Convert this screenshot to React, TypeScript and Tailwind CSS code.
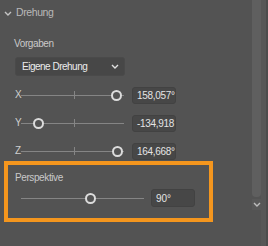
import React from 'react';

const font = { fontFamily: '"Liberation Sans", Arial, sans-serif' };

function Chevron({ className = '' }: { className?: string }) {
  return (
    <svg width="8" height="5" viewBox="0 0 8 5" className={className}>
      <path d="M1 1 L4 4 L7 1" fill="none" stroke="currentColor" strokeWidth="1.4" />
    </svg>
  );
}

function Slider({ width, knob, tick }: { width: number; knob: number; tick?: boolean }) {
  return (
    <div className="relative h-[20px]" style={{ width }}>
      <div className="absolute left-0 right-0 top-[9.5px] h-px bg-[#858585]" />
      {tick && <div className="absolute left-[53px] top-[6px] h-[8px] w-px bg-[#858585]" />}
      <div
        className="absolute top-[4.5px] h-[11px] w-[11px] rounded-full border-2 border-[#dcdcdc] bg-[#535353]"
        style={{ left: knob - 5.5 }}
      />
    </div>
  );
}

function ValueBox({ value }: { value: string }) {
  return (
    <div className="flex h-[17px] w-[44px] items-center rounded-[3px] border border-[#424242] bg-[#474747] pl-[4px] text-[10px] tracking-[-0.3px] text-[#e4e4e4]">
      {value}
    </div>
  );
}

function AxisRow({ label, knob, value }: { label: string; knob: number; value: string }) {
  return (
    <div className="flex h-[20px] items-center pl-[15px]">
      <span className="w-[6px] text-[10px] leading-none text-[#cfcfcf]">{label}</span>
      <Slider width={103} knob={knob} tick />
      <div className="ml-[8px]">
        <ValueBox value={value} />
      </div>
    </div>
  );
}

export default function App() {
  return (
    <div className="flex h-[246px] w-[268px] overflow-hidden bg-[#535353]" style={font}>
      <div className="flex w-[252px] flex-col">
        <div className="flex h-[26px] items-center gap-[4px] pl-[4px]">
          <Chevron className="text-[#c4c4c4]" />
          <span className="text-[10.5px] tracking-[-0.4px] text-[#b9b9b9]">Drehung</span>
        </div>

        <div className="mt-[12px] pl-[14px] text-[10px] leading-[12px] tracking-[-0.4px] text-[#c9c9c9]">Vorgaben</div>

        <div className="ml-[15px] mt-[7px] flex h-[19px] w-[110px] items-center justify-between rounded-[3px] border border-[#4a4a4a] bg-[#474747] pl-[6px] pr-[5px]">
          <span className="text-[10px] tracking-[-0.5px] text-[#ececec]">Eigene Drehung</span>
          <Chevron className="text-[#e0e0e0]" />
        </div>

        <div className="mt-[9px] flex flex-col gap-[8px]">
          <AxisRow label="X" knob={95} value="158,057°" />
          <AxisRow label="Y" knob={17} value="-134,918" />
          <AxisRow label="Z" knob={96} value="164,668°" />
        </div>

        <div className="ml-[4px] h-[61px] w-[209px] border-4 border-[#f4961e]">
          <div className="pl-[7px] pt-[7px] text-[10px] leading-[12px] tracking-[-0.4px] text-[#c9c9c9]">Perspektive</div>
          <div className="mt-[4px] flex items-center pl-[13px]">
            <Slider width={123} knob={69} />
            <div className="ml-[7px]">
              <div className="flex h-[18px] w-[44px] items-center rounded-[3px] border border-[#424242] bg-[#474747] pl-[4px] text-[10px] text-[#e4e4e4]">
                90°
              </div>
            </div>
          </div>
        </div>
      </div>

      <div className="flex w-[9px] flex-col">
        <div className="h-[197px] rounded-b-[4px] bg-[#5f5f5f]" />
        <div className="mt-[2px] flex h-[11px] items-center justify-center bg-[#585858] text-[#bdbdbd]">
          <Chevron />
        </div>
      </div>
      <div className="w-[5px] bg-[#575757]" />
      <div className="w-[2px] bg-[#4c4c4c]" />
    </div>
  );
}
